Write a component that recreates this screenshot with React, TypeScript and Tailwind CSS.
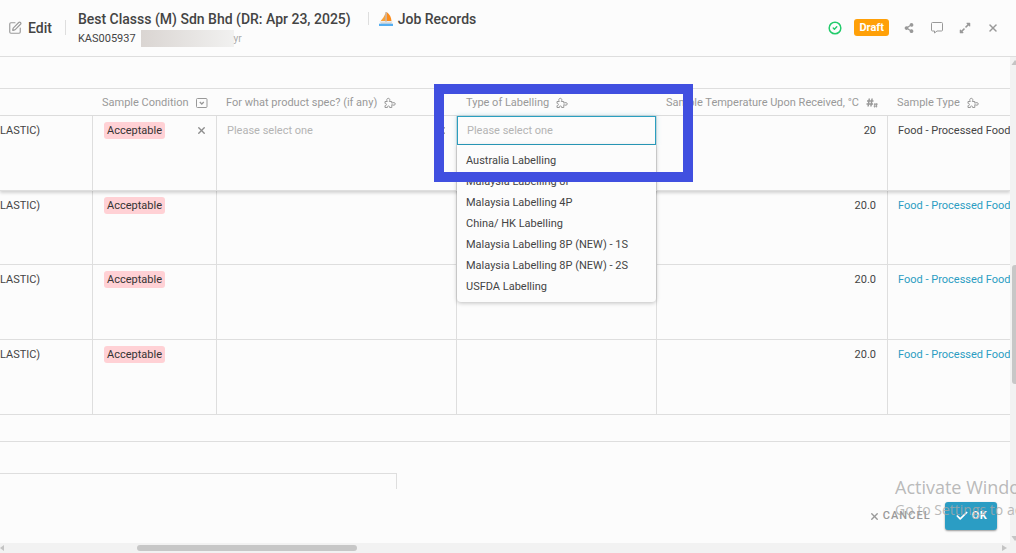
import React, { useState } from 'react';
import { Check, CircleCheck, SquarePen, X } from 'lucide-react';
import { FaExpandAlt, FaShareAlt } from 'react-icons/fa';

interface JobRow {
  id: number;
  sample: string;
  condition: string;
  temperature: string;
  sampleType: string;
}

const ROWS: JobRow[] = [
  { id: 1, sample: 'LASTIC)', condition: 'Acceptable', temperature: '20', sampleType: 'Food - Processed Food' },
  { id: 2, sample: 'LASTIC)', condition: 'Acceptable', temperature: '20.0', sampleType: 'Food - Processed Food' },
  { id: 3, sample: 'LASTIC)', condition: 'Acceptable', temperature: '20.0', sampleType: 'Food - Processed Food' },
  { id: 4, sample: 'LASTIC)', condition: 'Acceptable', temperature: '20.0', sampleType: 'Food - Processed Food' },
];

const LABELLING_OPTIONS = [
  'Australia Labelling',
  'Malaysia Labelling 8P',
  'Malaysia Labelling 4P',
  'China/ HK Labelling',
  'Malaysia Labelling 8P (NEW) - 1S',
  'Malaysia Labelling 8P (NEW) - 2S',
  'USFDA Labelling',
];

function PuzzleIcon() {
  return (
    <svg width="12" height="12" viewBox="0 0 12 12" fill="none" stroke="currentColor" className="shrink-0">
      <path d="M1 4.500h2.300C2.300 3 2.800 1.300 4.300 1.300S6.300 3 5.300 4.500h2.500v1.700c1.200-.9 3.500-.8 3.500.7s-2.300 1.600-3.500.7v2.900H5.600c.3-1-.3-1.500-1.100-1.500s-1.400.5-1.100 1.500H1V8.600c1 .2 1.400-.4 1.400-1.100S2 6.200 1 6.400z" />
    </svg>
  );
}

function DropdownIcon() {
  return (
    <svg width="12" height="12" viewBox="0 0 12 12" fill="none" stroke="currentColor" className="shrink-0">
      <rect x=".5" y="1.500" width="10.500" height="9" rx="1" />
      <path d="M3.800 5l2 2 2-2" strokeWidth="1.300" />
    </svg>
  );
}

function DecimalIcon() {
  return (
    <svg width="12" height="12" viewBox="0 0 12 12" fill="none" stroke="currentColor" className="shrink-0">
      <path d="M3.300 1.500L2.100 9.500M6.100 1.500L4.900 9.500M1 4h6.500M.5 7H7" strokeWidth="1.500" />
      <path d="M9 6l-.5 4.500M10.800 6l-.5 4.500M7.800 7.300h3.800M7.600 9.200h3.700" strokeWidth=".9" />
    </svg>
  );
}

function CommentIcon() {
  return (
    <svg width="12" height="12" viewBox="0 0 12 12" fill="none" stroke="currentColor">
      <path d="M1.500.500h9a1 1 0 011 1v6.500a1 1 0 01-1 1H6L3.500 11V9h-2a1 1 0 01-1-1V1.500a1 1 0 011-1z" />
    </svg>
  );
}

function SailboatIcon() {
  return (
    <svg width="14" height="14" viewBox="0 0 14 14" className="shrink-0">
      <path d="M6.500 1v8H1.600C3.500 7 5.500 4.200 6.500 1z" fill="#f7a23b" />
      <path d="M7.600 0c3 2 4.600 5.200 4.900 9H7.600z" fill="#fb8c1c" />
      <path d="M7 0v10" stroke="#9a8475" strokeWidth=".8" />
      <path d="M.5 9.500h13L12.300 12H2z" fill="#dcdcdc" />
      <path d="M0 11.700h14V14H0z" fill="#55aef0" />
    </svg>
  );
}

function HeaderLabel({ text, icon }: { text: string; icon?: React.ReactNode }) {
  return (
    <div className="flex items-center gap-[7px] whitespace-nowrap">
      <span>{text}</span>
      {icon}
    </div>
  );
}

function LabellingSelect() {
  const [value, setValue] = useState('');

  return (
    <div className="absolute inset-x-0 top-0 z-10">
      <input
        role="combobox"
        aria-label="Type of Labelling"
        aria-expanded="true"
        aria-controls="labelling-options"
        value={value}
        onChange={(e) => setValue(e.target.value)}
        placeholder="Please select one"
        className="block h-[29px] w-full border border-[#2a9fc0] bg-[#fcfcfc] px-[9px] shadow-[0_0_5px_rgba(42,159,192,0.35)] outline-none placeholder:text-[#b4b4b4]"
      />
      <ul id="labelling-options" role="listbox" className="rounded-b-sm bg-[#fcfcfc] py-[5px] shadow-[0_1px_4px_rgba(0,0,0,0.25)]">
        {LABELLING_OPTIONS.map((option) => (
          <li
            key={option}
            role="option"
            aria-selected={option === value}
            onClick={() => setValue(option)}
            className="cursor-pointer px-[9px] leading-[21px] whitespace-nowrap"
          >
            {option}
          </li>
        ))}
      </ul>
    </div>
  );
}

function RecordRow({ row, active }: { row: JobRow; active: boolean }) {
  const cell = 'relative border-r border-b border-[#dedede] pt-[6px] align-top';

  return (
    <tr className={active ? 'relative z-10 h-[75px] shadow-[0_2px_3px_rgba(0,0,0,0.17)]' : 'h-[75px] nth-2:h-[74px]'}>
      <td className={`${cell} leading-[17px]`}>{row.sample}</td>
      <td className={`${cell} pr-[9px] pl-[11px]`}>
        <div className="flex items-center justify-between">
          <span className="rounded-[3px] bg-[#ffd1d5] px-[3px] leading-[17px] text-[#333]">{row.condition}</span>
          {active && (
            <button aria-label="Clear condition" className="text-[#8d8d8d]">
              <X size={11} strokeWidth={3} />
            </button>
          )}
        </div>
      </td>
      <td className={`${cell} pr-[9px] pl-[10px]`}>
        {active && (
          <div className="flex items-center">
            <input
              aria-label="For what product spec?"
              placeholder="Please select one"
              className="h-[17px] min-w-0 flex-1 bg-transparent outline-none placeholder:text-[#b4b4b4]"
            />
            <button aria-label="Clear product spec" className="text-[#8d8d8d]">
              <X size={11} strokeWidth={3} />
            </button>
          </div>
        )}
      </td>
      <td className={cell}>{active && <LabellingSelect />}</td>
      <td className={`${cell} pr-[11px] text-right leading-[17px]`}>{row.temperature}</td>
      <td className="border-b border-[#dedede] pt-[6px] pl-[10px] align-top leading-[17px] whitespace-nowrap">
        {active ? row.sampleType : <a href="#" className="text-[#2b9cc2]">{row.sampleType}</a>}
      </td>
    </tr>
  );
}

function TopBar() {
  return (
    <header className="flex h-[57px] shrink-0 items-center border-b border-[#dedede] pr-[17px] pb-px pl-2">
      <SquarePen size={14} className="text-[#9b9b9b]" />
      <span className="ml-[6px] text-sm font-medium">Edit</span>
      <div className="ml-[13px] h-[15px] w-px bg-[#dedede]" />
      <div className="ml-3 flex flex-col gap-px">
        <div className="flex items-center">
          <h1 className="text-sm font-medium">Best Classs (M) Sdn Bhd (DR: Apr 23, 2025)</h1>
          <div className="ml-[17px] h-[13px] w-px bg-[#dedede]" />
          <div className="ml-[10px] flex items-center gap-[5px]">
            <SailboatIcon />
            <span className="text-sm font-medium">Job Records</span>
          </div>
        </div>
        <div className="flex items-center text-[11px] leading-[17px]">
          <span>KAS005937</span>
          <span className="ml-[5px] h-[17px] w-[93px] bg-linear-to-r from-[#dad5d2] to-[#f1f1f0]" />
          <span className="text-[10px] text-[#aaa]">yr</span>
        </div>
      </div>
      <div className="ml-auto flex items-center text-[#999]">
        <CircleCheck size={14} strokeWidth={2.5} className="text-[#22cb6b]" />
        <span className="ml-3 rounded-[3px] bg-[#ffa008] px-[5px] text-[11px] leading-[17px] font-bold text-white">Draft</span>
        <button aria-label="Share" className="ml-[15px]"><FaShareAlt size={10} /></button>
        <button aria-label="Comments" className="ml-[17px]"><CommentIcon /></button>
        <button aria-label="Expand" className="ml-4"><FaExpandAlt size={12} /></button>
        <button aria-label="Close" className="ml-4"><X size={12} strokeWidth={3} /></button>
      </div>
    </header>
  );
}

function VerticalScrollbar() {
  return (
    <div className="relative w-[6px] shrink-0 overflow-hidden bg-[#f2f2f2]">
      <svg width="6" height="5" viewBox="0 0 6 5" className="absolute top-[3px] left-0" fill="#c4c4c4">
        <path d="M1.500 5L5 0l5 5z" />
      </svg>
      <div className="absolute top-[208px] left-[2px] h-[119px] w-[6px] rounded-[3px] bg-[#c7c7c7]" />
      <svg width="6" height="5" viewBox="0 0 6 5" className="absolute bottom-[2px] left-0" fill="#c4c4c4">
        <path d="M1.500 0L5 5l5-5z" />
      </svg>
    </div>
  );
}

function HorizontalScrollbar() {
  return (
    <div className="flex h-[10px] shrink-0 items-center bg-[#f2f2f2]">
      <svg width="4" height="6" viewBox="0 0 4 6" fill="#c4c4c4">
        <path d="M4 0v6L0 3z" />
      </svg>
      <div className="ml-[133px] h-[6px] w-[220px] rounded-full bg-[#c7c7c7]" />
      <svg width="5" height="6" viewBox="0 0 5 6" className="mr-[9px] ml-auto" fill="#c4c4c4">
        <path d="M0 0v6l5-3z" />
      </svg>
    </div>
  );
}

export default function App() {
  return (
    <div className="relative flex h-screen flex-col overflow-hidden bg-[#fcfcfc] font-['Roboto',sans-serif] text-[11px] text-[#444]">
      <TopBar />
      <div className="flex min-h-0 flex-1">
        <main className="flex min-w-0 flex-1 flex-col overflow-hidden pt-[31px]">
          <table className="w-full shrink-0 table-fixed border-separate border-spacing-0">
            <colgroup>
              <col className="w-[93px]" />
              <col className="w-[124px]" />
              <col className="w-[240px]" />
              <col className="w-[200px]" />
              <col className="w-[231px]" />
              <col />
            </colgroup>
            <thead className="text-left text-[#999]">
              <tr className="h-[28px] *:border-y *:border-[#dedede] *:px-[9px] *:pt-[2px] *:font-normal">
                <th />
                <th><HeaderLabel text="Sample Condition" icon={<DropdownIcon />} /></th>
                <th><HeaderLabel text="For what product spec? (if any)" icon={<PuzzleIcon />} /></th>
                <th className="relative">
                  <HeaderLabel text="Type of Labelling" icon={<PuzzleIcon />} />
                  {/* Annotation frame around the open field */}
                  <div className="pointer-events-none absolute -top-[5px] -left-[23px] z-30 h-[98px] w-[259px] border-[10px] border-[#404fe0]" />
                </th>
                <th><HeaderLabel text="Sample Temperature Upon Received, °C" icon={<DecimalIcon />} /></th>
                <th><HeaderLabel text="Sample Type" icon={<PuzzleIcon />} /></th>
              </tr>
            </thead>
            <tbody>
              {ROWS.map((row, i) => (
                <RecordRow key={row.id} row={row} active={i === 0} />
              ))}
            </tbody>
          </table>

          <div className="mt-[26px] border-t border-[#dedede]" />
          <div className="mt-[31px] h-4 w-[397px] shrink-0 border-t border-r border-[#dedede]" />

          <footer className="mt-auto mb-[13px] flex items-center justify-end gap-[14px] pr-[13px]">
            <button className="flex items-center gap-[3px] font-medium tracking-widest text-[#999]">
              <X size={11} strokeWidth={3} />
              CANCEL
            </button>
            <button className="flex h-7 items-center gap-[3px] rounded-[3px] bg-[#2b9dc4] px-[10px] font-bold tracking-wide text-white shadow-[0_1px_2px_rgba(0,0,0,0.4)]">
              <Check size={14} strokeWidth={3} />
              OK
            </button>
          </footer>
        </main>
        <VerticalScrollbar />
      </div>
      <HorizontalScrollbar />

      {/* System watermark */}
      <div className="pointer-events-none absolute top-[475px] left-[895px] z-40 font-['Open_Sans',sans-serif] whitespace-nowrap text-[#a8a8a8]/80">
        <p className="text-lg leading-6">Activate Windows</p>
        <p className="text-sm leading-[22px]">Go to Settings to activate Windows.</p>
      </div>
    </div>
  );
}
